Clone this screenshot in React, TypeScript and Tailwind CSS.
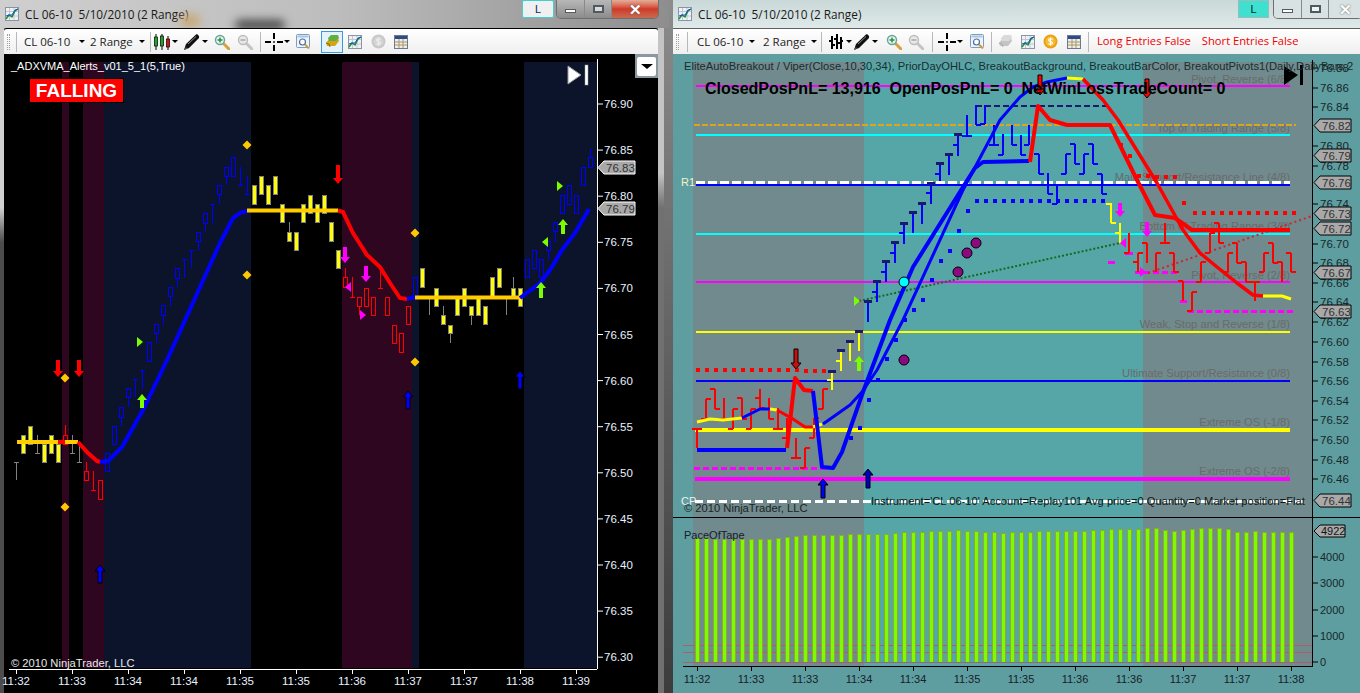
import React from "react";

type Pt = [number, number];
// x, wick top, body top, body bottom, wick bottom, colour key
type Candle = [number, number, number, number, number, "r" | "b" | "y" | "g"];
// x, high, low, open tick, close tick, colour, navy cap on top
type Ohlc = [number, number, number, number | null, number | null, string, boolean?];

const RED = "#ff0000";
const BLUE = "#0000ff";
const YEL = "#ffff00";
const MAG = "#ff00ff";
const LIME = "#7cfc00";

const pts = (p: Pt[]) => p.map((q) => q.join(",")).join(" ");

const leftCandles: Candle[] = [
  [16, 462, 462, 462, 480, "g"], [23, 435, 435, 453, 453, "y"], [30, 426, 426, 444, 444, "y"],
  [37, 435, 453, 453, 453, "g"], [44, 444, 444, 462, 462, "y"], [51, 435, 435, 453, 453, "y"],
  [58, 444, 444, 462, 462, "y"], [65, 425, 435, 444, 444, "r"], [72, 435, 453, 453, 453, "g"],
  [79, 444, 462, 462, 462, "g"], [86, 462, 471, 480, 480, "r"], [93, 471, 490, 490, 490, "r"],
  [100, 480, 480, 499, 499, "r"], [107, 453, 453, 471, 471, "b"], [114, 426, 426, 444, 444, "b"],
  [121, 407, 407, 417, 426, "b"], [128, 388, 388, 397, 407, "b"], [135, 379, 379, 379, 397, "b"],
  [142, 370, 370, 370, 389, "b"], [149, 342, 342, 361, 361, "b"], [156, 324, 324, 333, 343, "b"],
  [163, 305, 305, 315, 325, "b"], [170, 287, 287, 296, 306, "b"], [177, 268, 268, 278, 287, "b"],
  [184, 259, 259, 259, 278, "b"], [191, 250, 250, 250, 268, "b"], [198, 232, 232, 241, 251, "b"],
  [205, 213, 213, 223, 232, "b"], [212, 204, 204, 204, 223, "b"], [219, 185, 185, 194, 204, "b"],
  [226, 167, 167, 176, 185, "b"], [233, 157, 157, 176, 176, "b"], [240, 167, 185, 185, 185, "b"],
  [247, 176, 194, 194, 194, "b"], [254, 185, 185, 204, 204, "y"], [261, 176, 176, 194, 194, "y"],
  [268, 185, 185, 204, 204, "y"], [275, 176, 176, 194, 194, "y"], [282, 204, 204, 222, 222, "y"],
  [289, 222, 232, 241, 241, "y"], [296, 232, 232, 250, 250, "y"], [303, 204, 204, 222, 222, "y"],
  [310, 195, 195, 213, 213, "y"], [317, 204, 204, 222, 222, "y"], [324, 195, 195, 213, 213, "y"],
  [331, 222, 222, 241, 241, "y"], [338, 250, 250, 268, 268, "y"], [345, 268, 277, 287, 287, "r"],
  [352, 277, 297, 297, 297, "r"], [359, 297, 297, 306, 315, "r"], [366, 288, 288, 306, 306, "r"],
  [373, 297, 297, 315, 315, "r"], [380, 269, 288, 288, 288, "r"], [387, 297, 297, 315, 315, "r"],
  [394, 325, 325, 343, 343, "r"], [401, 333, 333, 352, 352, "r"], [408, 306, 306, 324, 324, "r"],
  [415, 277, 277, 296, 296, "b"], [422, 268, 268, 287, 287, "y"], [429, 297, 297, 297, 315, "g"],
  [436, 288, 288, 306, 306, "y"], [443, 306, 315, 324, 324, "y"], [450, 325, 325, 333, 343, "y"],
  [457, 297, 297, 315, 315, "y"], [464, 288, 288, 306, 306, "y"], [471, 306, 306, 315, 325, "y"],
  [478, 297, 297, 315, 315, "y"], [485, 306, 306, 324, 324, "y"], [492, 277, 277, 296, 296, "y"],
  [499, 268, 268, 287, 287, "y"], [506, 297, 297, 297, 315, "g"], [513, 277, 288, 297, 297, "y"],
  [520, 288, 288, 306, 306, "y"], [527, 259, 259, 277, 277, "b"], [534, 250, 250, 268, 268, "b"],
  [541, 259, 259, 277, 277, "b"], [548, 241, 241, 250, 260, "b"], [555, 222, 222, 231, 242, "b"],
  [562, 195, 195, 213, 213, "b"], [569, 185, 185, 204, 204, "b"], [576, 195, 195, 213, 213, "b"],
  [583, 167, 167, 185, 185, "b"], [590, 148, 157, 167, 167, "b"],
];

const rightBars: Ohlc[] = [
  [697, 429, 448, 429, 429, RED], [706, 399, 419, 419, 399, RED], [715, 389, 409, 389, 409, RED],
  [724, 398, 419, 419, 419, RED], [733, 409, 429, 429, 409, RED], [742, 398, 419, 398, 419, RED],
  [751, 409, 429, 429, 409, RED], [760, 389, 408, 398, 408, RED], [769, 398, 419, 409, 419, RED],
  [778, 408, 429, 429, 429, RED], [787, 418, 438, 438, null, RED], [796, 438, 458, 458, 458, RED],
  [805, 448, 468, 468, 448, RED], [814, 418, 438, 438, 418, RED], [823, 389, 409, 409, 389, RED],
  [832, 372, 390, 380, null, YEL, true], [841, 351, 371, 361, null, YEL, true],
  [850, 342, 361, null, null, YEL, true], [859, 332, 351, null, null, YEL, true],
  [868, 302, 322, null, null, BLUE, true], [877, 282, 302, 292, null, BLUE, true],
  [886, 262, 282, 272, null, BLUE, true], [895, 243, 263, 253, null, BLUE, true],
  [904, 224, 244, 233, null, BLUE, true], [913, 213, 233, null, null, BLUE, true],
  [922, 204, 224, null, null, BLUE, true], [931, 184, 204, 193, null, BLUE, true],
  [940, 164, 181, 174, null, BLUE, true], [949, 155, 175, null, null, BLUE, true],
  [958, 135, 156, 145, null, BLUE, true], [967, 115, 136, 136, 136, BLUE],
  [976, 105, 125, null, 125, BLUE], [985, 105, 124, 124, null, BLUE], [994, 125, 145, 145, 145, BLUE],
  [1003, 134, 155, 155, null, BLUE], [1012, 125, 145, null, 145, BLUE], [1021, 135, 155, null, 155, BLUE],
  [1029, 125, 145, 145, null, BLUE], [1039, 154, 174, 154, 174, BLUE], [1048, 173, 194, null, 194, BLUE],
  [1057, 185, 204, 204, null, BLUE], [1066, 154, 174, 174, 154, BLUE], [1075, 144, 164, 144, 164, BLUE],
  [1084, 154, 174, 174, 154, BLUE], [1093, 144, 164, 144, 164, BLUE], [1102, 174, 194, 174, 194, BLUE],
  [1111, 203, 223, 204, 223, YEL], [1120, 223, 243, 233, null, YEL], [1129, 233, 253, 253, null, RED],
  [1138, 253, 272, 262, 253, RED], [1147, 243, 263, 243, null, RED], [1156, 253, 272, null, 253, RED],
  [1165, 223, 243, 243, 243, RED], [1174, 253, 272, 253, 272, RED], [1183, 281, 301, 281, null, RED],
  [1192, 292, 311, 311, 292, RED], [1201, 262, 282, 282, 262, RED], [1210, 233, 253, 253, 233, RED],
  [1219, 223, 243, 223, 243, RED], [1228, 253, 272, 272, 253, RED], [1237, 243, 263, 243, 263, RED],
  [1246, 262, 282, 262, 282, RED], [1255, 282, 301, 282, 282, RED], [1264, 253, 272, 272, 253, RED],
  [1273, 243, 263, 243, 263, RED], [1282, 262, 282, 262, null, RED], [1291, 253, 272, 253, 272, RED],
];

const paceTops = [
  70, 70, 72, 72, 72, 72, 72, 72, 72, 68, 65, 62, 59, 59, 59, 59, 59, 56, 56, 56, 56, 56, 53, 50, 50, 50,
  47, 47, 47, 45, 47, 47, 50, 50, 53, 50, 50, 50, 47, 47, 47, 47, 47, 47, 45, 45, 42, 42, 42, 42, 38, 38,
  45, 47, 45, 42, 38, 38, 38, 42, 50, 50, 47, 50, 50, 50, 50,
];

const pivotLabels: [string, number][] = [
  ["Pivot, Reverse (6/8)", 83],
  ["Top of Trading Range (5/8)", 132],
  ["Main Support/Resistance Line (4/8)", 181],
  ["Bottom of Trading Range (3/8)", 230],
  ["Pivot, Reverse (2/8)", 279],
  ["Weak, Stop and Reverse (1/8)", 328],
  ["Ultimate Support/Resistance (0/8)", 377],
  ["Extreme OS (-1/8)", 426],
  ["Extreme OS (-2/8)", 475],
];

const rightPrices: [string, number][] = [
  ["76.88", 68], ["76.86", 88], ["76.84", 107], ["76.80", 146], ["76.78", 166], ["76.74", 204],
  ["76.70", 244], ["76.68", 263], ["76.66", 283], ["76.64", 302], ["76.62", 322], ["76.60", 342],
  ["76.58", 362], ["76.56", 381], ["76.54", 401], ["76.52", 420], ["76.50", 440], ["76.48", 460],
  ["76.46", 479],
];

const rightTags: [string, number][] = [
  ["76.82", 125], ["76.79", 155], ["76.76", 182], ["76.73", 213], ["76.72", 228], ["76.67", 272],
  ["76.63", 311], ["76.44", 500],
];

const ArrowV = ({ x, y1, y2, fill, stroke, up }: { x: number; y1: number; y2: number; fill: string; stroke?: string; up?: boolean }) => {
  const h = up ? 6 : -6;
  const tip = up ? y1 : y2;
  const end = up ? y2 : y1;
  return (
    <polygon
      points={pts([[x, tip], [x + 5, tip + h], [x + 2, tip + h], [x + 2, end], [x - 2, end], [x - 2, tip + h], [x - 5, tip + h]])}
      fill={fill}
      stroke={stroke ?? "none"}
    />
  );
};

const Tri = ({ x, y, fill, left }: { x: number; y: number; fill: string; left?: boolean }) => (
  <polygon points={left ? pts([[x - 3, y], [x + 3, y - 5], [x + 3, y + 5]]) : pts([[x + 3, y], [x - 3, y - 5], [x - 3, y + 5]])} fill={fill} />
);

const Diamond = ({ x, y }: { x: number; y: number }) => (
  <polygon points={pts([[x, y - 4.5], [x + 4.5, y], [x, y + 4.5], [x - 4.5, y]])} fill="#ffc800" />
);

const Tag = ({ y, label, left, stroke }: { y: number; label: string; left: number; stroke: string }) => (
  <g>
    <polygon
      points={pts([[left, y + 0.5], [left + 6, y - 6], [left + 37, y - 6], [left + 37, y + 7], [left + 6, y + 7]])}
      fill="#a9a9a9"
      stroke={stroke}
    />
    <text x={left + 8} y={y + 4.5} fill="#333333" fontSize={11.5}>{label}</text>
  </g>
);

/* toolbar bits */
const Grip = () => <div className="ml-[3px] h-[16px] w-[3px] border-x border-dotted border-[#a0a0a0]" />;
const Sep = ({ className }: { className: string }) => <div className={`h-[20px] w-px bg-[#b8b8b8] ${className}`} />;
const Caret = ({ className }: { className: string }) => (
  <div className={`h-0 w-0 border-x-[3.5px] border-t-[3.5px] border-x-transparent border-t-black ${className}`} />
);
const ToolLabel = ({ text, className }: { text: string; className: string }) => (
  <span className={`whitespace-nowrap text-[11.5px] text-[#1c1c1c] ${className}`}>{text}</span>
);

const CandlesIcon = () => (
  <svg width="18" height="18" viewBox="0 0 18 18">
    <path d="M3 1v16M9 1v16M15 3v14" stroke="#000" strokeWidth="1" />
    <rect x="1.5" y="4" width="3" height="9" fill="#1fa52a" stroke="#000" strokeWidth="0.7" />
    <rect x="7.5" y="3" width="3" height="10" fill="#1fa52a" stroke="#000" strokeWidth="0.7" />
    <rect x="13.5" y="6" width="3" height="8" fill="#e01010" stroke="#000" strokeWidth="0.7" />
  </svg>
);

const BarsIcon = () => (
  <svg width="16" height="18" viewBox="0 0 16 18">
    <path d="M4 3v13M9 1v15M13 4v12M1 8h3M4 12h3M6 6h3M9 10h3M13 8h2" stroke="#000" strokeWidth="2" fill="none" />
  </svg>
);

const PenIcon = () => (
  <svg width="19" height="18" viewBox="0 0 19 18">
    <path d="M1 17l2-6L13 1.500c1-1 4 1.500 3 3.500L6 15z" fill="#111" />
    <path d="M5 11L13 3.500" stroke="#8a8a8a" strokeWidth="1" />
    <path d="M1 17l2-3 1 1.500z" fill="#555" />
  </svg>
);

const ZoomIcon = ({ active, plus }: { active?: boolean; plus?: boolean }) => (
  <svg width="16" height="16" viewBox="0 0 16 16">
    <path d="M9.500 9.500L15 15" stroke={active ? "#d8a040" : "#c4c4c4"} strokeWidth="3" strokeLinecap="round" />
    <circle cx="6" cy="6" r="4.500" fill={active ? "#e8f6f2" : "#e8e8e8"} stroke={active ? "#6aa0a0" : "#bcbcbc"} strokeWidth="1.400" />
    <path d={plus ? "M3.500 6h5M6 3.500v5" : "M3.500 6h5"} stroke={active ? "#1c9a30" : "#a8a8a8"} strokeWidth="1.500" />
  </svg>
);

const CrossIcon = () => (
  <svg width="18" height="18" viewBox="0 0 18 18">
    <path d="M0 9h6M12 9h6M9 0v6M9 12v6" stroke="#000" strokeWidth="2" />
    <rect x="8.200" y="8.200" width="1.600" height="1.600" fill="#000" />
  </svg>
);

const MagDocIcon = () => (
  <svg width="15" height="15" viewBox="0 0 15 15">
    <rect x="0.500" y="0.500" width="13" height="13" rx="1" fill="#eef4fa" stroke="#7c9cc0" />
    <rect x="1.500" y="1.500" width="11" height="2" fill="#a8c4e4" />
    <circle cx="6.500" cy="8" r="3" fill="#fff" stroke="#4a6f9a" strokeWidth="1.200" />
    <path d="M9 10.500l4 4" stroke="#d09a40" strokeWidth="2" />
  </svg>
);

const IngotIcon = ({ gray }: { gray?: boolean }) => (
  <svg width="15" height="15" viewBox="0 0 15 15">
    <path d="M1 9l4-5h8l1 3-4 5H2z" fill={gray ? "#c4c4c4" : "#d4a417"} />
    <path d="M3 4l3-3h7l1 3-3 3H4z" fill={gray ? "#dadada" : "#5fb040"} />
    <path d="M1 9l3 1 1 3" stroke={gray ? "#a8a8a8" : "#8a6c08"} fill="none" />
  </svg>
);

const ChartIcon = () => (
  <svg width="14" height="14" viewBox="0 0 14 14">
    <rect x="0.500" y="0.500" width="13" height="13" fill="#eef2f6" stroke="#8a94a4" />
    <path d="M4.500 1v12M9 1v12M1 4.500h12M1 9h12" stroke="#c2c8d0" strokeWidth="1" />
    <path d="M1 12l3-4 3 2 3-6 3-2" stroke="#1c8c30" strokeWidth="1.400" fill="none" />
    <path d="M1 9l3-1 3 0 3-5 3-1" stroke="#1c50d0" strokeWidth="1" fill="none" />
  </svg>
);

const CoinIcon = ({ gold }: { gold?: boolean }) => (
  <svg width="15" height="15" viewBox="0 0 15 15">
    <circle cx="7.500" cy="7.500" r="7" fill={gold ? "#eba20f" : "#c8c8c8"} />
    <circle cx="7.500" cy="7.500" r="5" fill={gold ? "#f5bc3c" : "#d4d4d4"} />
    <path d="M9.500 5.500C9 4.500 5.500 4.200 5.500 6c0 2 4 1 4 3 0 1.700-3.500 1.500-4 .5M7.500 3.500v8" stroke={gold ? "#fff" : "#eeeeee"} strokeWidth="1.100" fill="none" />
  </svg>
);

const TableIcon = () => (
  <svg width="14" height="14" viewBox="0 0 14 14">
    <rect x="0.500" y="0.500" width="13" height="13" fill="#f4ecd8" stroke="#6a7a94" />
    <rect x="1" y="1" width="12" height="3" fill="#2c4a8c" />
    <path d="M5 4v9M9 4v9M1 7h12M1 10h12" stroke="#a09a80" strokeWidth="1" />
  </svg>
);

const TitleIcon = () => <ChartIcon />;

const WinButtons = ({ pale }: { pale?: boolean }) => (
  <div className="flex h-[19px] items-stretch overflow-hidden rounded-b-[5px] border border-t-0 border-[#6e6e6e]">
    <div className={`flex items-center justify-center border-r border-[#8a8a8a] ${pale ? "w-[28px] bg-[#d8e2e2]" : "w-[28px] bg-gradient-to-b from-[#b8b8b8] to-[#8c8c8c]"}`}>
      <div className="mt-[4px] h-[4px] w-[11px] border border-[#5a5a5a] bg-white" />
    </div>
    <div className={`flex items-center justify-center border-r border-[#8a8a8a] ${pale ? "w-[27px] bg-[#d8e2e2]" : "w-[27px] bg-gradient-to-b from-[#b8b8b8] to-[#8c8c8c]"}`}>
      <div className="h-[8px] w-[11px] border-2 border-[#4e5a5e] bg-white/60" />
    </div>
    <div className={`flex items-center justify-center text-[15px] font-bold leading-none text-white [text-shadow:0_0_2px_#555] ${pale ? "w-[33px] bg-[#d8e2e2]" : "w-[46px] bg-gradient-to-b from-[#e2ad9a] via-[#d03828] to-[#c86a50]"}`}>
      ✕
    </div>
  </div>
);

const LeftChart = () => (
  <svg width="654" height="639" viewBox="4 54 654 639" className="relative block overflow-visible">
    {/* session shading */}
    <rect x={62} y={62} width={7} height={606} fill="#2f0620" />
    <rect x={83} y={62} width={21} height={606} fill="#2f0620" />
    <rect x={104} y={62} width={147} height={606} fill="#0c142b" />
    <rect x={342} y={62} width={70} height={606} fill="#2f0620" />
    <rect x={412} y={62} width={7} height={606} fill="#0c142b" />
    <rect x={524} y={62} width={73} height={606} fill="#0c142b" />

    {leftCandles.map(([x, hi, t, b, lo, c], i) => {
      const col = c === "r" ? RED : c === "b" ? BLUE : "#808080";
      const px = x + 0.5;
      const wick = c === "y" ? "#808080" : col;
      return (
        <g key={i} shapeRendering="crispEdges">
          <line x1={px} x2={px} y1={hi} y2={t} stroke={wick} />
          <line x1={px} x2={px} y1={b} y2={lo} stroke={wick} />
          {t === b ? (
            <line x1={x - 2} x2={x + 3} y1={t + 0.5} y2={t + 0.5} stroke={col} />
          ) : (
            <rect x={x - 1.5} y={t + 0.5} width={4} height={b - t} fill={c === "y" ? YEL : "none"} stroke={c === "y" ? "#808080" : col} />
          )}
        </g>
      );
    })}

    {/* ADXVMA line */}
    <g fill="none" strokeWidth={4}>
      <polyline points={pts([[17, 442], [78, 442]])} stroke="#ffcc00" />
      <polyline points={pts([[58, 442], [65, 442]])} stroke={RED} />
      <polyline points={pts([[78, 442], [88, 453], [97, 461], [100, 462]])} stroke={RED} />
      <polyline points={pts([[100, 462], [108, 461], [122, 447], [143, 410], [167, 360], [220, 243], [233, 218], [240, 213], [247, 211]])} stroke={BLUE} />
      <polyline points={pts([[247, 210.5], [338, 210.5]])} stroke="#ffcc00" />
      <polyline points={pts([[338, 210.5], [343, 212], [353, 233], [367, 255], [380, 267], [390, 283], [400, 298], [407, 299]])} stroke={RED} />
      <polyline points={pts([[407, 299], [415, 297]])} stroke={BLUE} />
      <polyline points={pts([[415, 297.5], [520, 297.5]])} stroke="#ffcc00" />
      <polyline points={pts([[520, 298], [540, 283], [550, 270], [562, 250], [575, 233], [589, 209]])} stroke={BLUE} />
    </g>

    <Diamond x={65} y={378} />
    <Diamond x={65} y={507} />
    <Diamond x={247} y={145} />
    <Diamond x={247} y={275} />
    <Diamond x={415} y={233} />
    <Diamond x={415} y={362} />

    <ArrowV x={58} y1={360} y2={377} fill={RED} />
    <ArrowV x={79} y1={360} y2={377} fill={RED} />
    <ArrowV x={338} y1={165} y2={184} fill={RED} />
    <ArrowV x={345} y1={247} y2={263} fill={MAG} />
    <ArrowV x={366} y1={266} y2={282} fill={MAG} />
    <Tri x={348} y={287} fill={MAG} left />
    <Tri x={363} y={315} fill={MAG} />
    <Tri x={140} y={342} fill={LIME} />
    <Tri x={545} y={242} fill={LIME} left />
    <Tri x={560} y={186} fill={LIME} />
    <ArrowV up x={142} y1={394} y2={408} fill={LIME} />
    <ArrowV up x={541} y1={282} y2={298} fill={LIME} />
    <ArrowV up x={563} y1={219} y2={234} fill={LIME} />
    <ArrowV up x={100} y1={565} y2={583} fill={BLUE} stroke="#000" />
    <ArrowV up x={408} y1={391} y2={409} fill={BLUE} stroke="#000" />
    <ArrowV up x={520} y1={371} y2={389} fill={BLUE} stroke="#000" />

    <polygon points={pts([[568, 66], [581, 75], [568, 84]])} fill="#ffffff" stroke="#9a9a9a" />
    <rect x={585} y={65} width={3} height={20} fill="#ffffff" stroke="#9a9a9a" strokeWidth={0.5} />

    {/* axes */}
    <line x1={597.5} x2={597.5} y1={59} y2={669} stroke="#ffffff" />
    <line x1={9} x2={597} y1={669.5} y2={669.5} stroke="#ffffff" />
    {["76.90", "76.85", "76.80", "76.75", "76.70", "76.65", "76.60", "76.55", "76.50", "76.45", "76.40", "76.35", "76.30"].map((p, i) => {
      const y = 104 + i * 46.1;
      return (
        <g key={p}>
          <line x1={597} x2={603} y1={y} y2={y} stroke="#ffffff" />
          <text x={604} y={y + 4} fill="#e8f2ff" fontSize={11.5}>{p}</text>
        </g>
      );
    })}
    {["11:32", "11:33", "11:34", "11:34", "11:35", "11:35", "11:36", "11:37", "11:37", "11:38", "11:39"].map((t, i) => {
      const x = 16 + i * 56;
      return (
        <g key={i}>
          <line x1={x + 0.5} x2={x + 0.5} y1={669} y2={674} stroke="#ffffff" />
          <text x={x} y={685} textAnchor="middle" fill="#e8f2ff" fontSize={11.5}>{t}</text>
        </g>
      );
    })}
    <Tag y={167} label="76.83" left={598} stroke="#ffffff" />
    <Tag y={208} label="76.79" left={598} stroke="#ffffff" />

    <text x={11} y={70} fill="#ffffff" fontSize={11}>_ADXVMA_Alerts_v01_5_1(5,True)</text>
    <text x={11} y={667} fill="#e8e8e8" fontSize={11.2}>© 2010 NinjaTrader, LLC</text>
  </svg>
);

const RightChart = () => {
  const orange = "#daa520";
  return (
    <svg width="687" height="463" viewBox="673 54 687 463" className="block">
      <rect x={693} y={62} width={171} height={455} fill="#708a8d" />
      <rect x={864} y={62} width={279} height={455} fill="#56a5a7" />
      <rect x={1143} y={62} width={169} height={455} fill="#708a8d" />

      {pivotLabels.map(([t, y]) => (
        <text key={t} x={1290} y={y} textAnchor="end" fill="#6a6a6a" fontSize={11.2}>{t}</text>
      ))}

      <g fill="none" shapeRendering="crispEdges">
        <line x1={696} x2={1290} y1={86} y2={86} stroke={MAG} strokeWidth={2} />
        <line x1={694} x2={1296} y1={125} y2={125} stroke={orange} strokeWidth={2} strokeDasharray="6 2" />
        <line x1={696} x2={1290} y1={135} y2={135} stroke="#00ffff" strokeWidth={2} />
        <line x1={696} x2={1290} y1={185} y2={185} stroke={BLUE} strokeWidth={2} />
        <line x1={696} x2={1290} y1={182} y2={182} stroke="#ffffff" strokeWidth={3} strokeDasharray="9 3" />
        <line x1={696} x2={1290} y1={234} y2={234} stroke="#00ffff" strokeWidth={2} />
        <line x1={696} x2={1290} y1={282} y2={282} stroke={MAG} strokeWidth={2} />
        <line x1={696} x2={1290} y1={332} y2={332} stroke={YEL} strokeWidth={2} />
        <line x1={696} x2={1290} y1={381} y2={381} stroke={BLUE} strokeWidth={2} />
        <line x1={695} x2={1290} y1={430} y2={430} stroke={YEL} strokeWidth={4} />
        <line x1={695} x2={1290} y1={479} y2={479} stroke={MAG} strokeWidth={4} />
        <line x1={695} x2={1305} y1={501} y2={501} stroke="#ffffff" strokeWidth={3} strokeDasharray="8 4" />
        <line x1={976} x2={1106} y1={106} y2={106} stroke="#191970" strokeWidth={2} strokeDasharray="6 3" />
        <line x1={694} x2={827} y1={468} y2={468} stroke={MAG} strokeWidth={3} strokeDasharray="6 3" />
        <line x1={1135} x2={1178} y1={272} y2={272} stroke={MAG} strokeWidth={3} strokeDasharray="6 3" />
        <line x1={1188} x2={1295} y1={311} y2={311} stroke={MAG} strokeWidth={3} strokeDasharray="6 3" />
        <rect x={1108} y={261} width={7} height={3} fill={MAG} />
        <rect x={1125} y={252} width={8} height={3} fill={MAG} />
        <rect x={1180} y={300} width={7} height={3} fill={MAG} />
      </g>

      {/* stop dots */}
      <g shapeRendering="crispEdges">
        {[0, 1, 2, 3, 4, 5, 6, 7, 8, 9, 10, 11].map((i) => (
          <rect key={i} x={696 + i * 9} y={368} width={4} height={4} fill={RED} />
        ))}
        {[804, 813, 822].map((x) => (
          <rect key={x} x={x} y={369} width={4} height={4} fill={RED} />
        ))}
        {[[1119, 143], [1128, 154], [1137, 174], [1146, 174], [1155, 175], [1164, 175], [1173, 175], [1182, 201]].map(([x, y]) => (
          <rect key={x} x={x} y={y} width={4} height={4} fill={RED} />
        ))}
        {[1193, 1202, 1211, 1220, 1229, 1238, 1247, 1256, 1265, 1274, 1283, 1292].map((x) => (
          <rect key={x} x={x} y={211} width={4} height={4} fill={RED} />
        ))}
        {[975, 984, 993, 1002, 1011, 1020, 1029, 1038, 1047, 1056, 1065, 1074, 1083, 1092, 1101].map((x) => (
          <rect key={x} x={x} y={199} width={4} height={4} fill={BLUE} />
        ))}
        {[[966, 209], [957, 229], [948, 249], [939, 259], [930, 278], [921, 298], [912, 308], [903, 318], [894, 338], [885, 357], [876, 378], [867, 398], [858, 426], [849, 436]].map(([x, y]) => (
          <rect key={x} x={x} y={y} width={4} height={4} fill={BLUE} />
        ))}
      </g>

      {/* dotted trend lines */}
      <line x1={859} x2={1120} y1={301} y2={243} stroke="#176b1f" strokeWidth={2} strokeDasharray="2 2" />
      <line x1={1148} x2={1312} y1={273} y2={216} stroke="#c8282c" strokeWidth={2} strokeDasharray="2 3" />

      {/* OHLC bars */}
      {rightBars.map(([x, hi, lo, open, close, col, cap], i) => (
        <g key={i} shapeRendering="crispEdges" fill={col}>
          <rect x={x - 1} y={hi} width={2} height={lo - hi} />
          {open !== null && <rect x={x - 5} y={open - 1} width={5} height={2} />}
          {close !== null && <rect x={x} y={close - 1} width={5} height={2} />}
          {cap && <rect x={x - 4} y={hi - 2} width={8} height={3} fill="#191970" />}
        </g>
      ))}

      {/* viper thick lines */}
      <g fill="none" strokeWidth={3} strokeLinejoin="round">
        <polyline points={pts([[697, 422], [710, 419], [723, 420], [742, 418]])} stroke={YEL} />
        <polyline points={pts([[742, 418], [760, 409], [770, 409]])} stroke={BLUE} />
        <polyline points={pts([[770, 409], [777, 410]])} stroke={YEL} />
        <polyline points={pts([[777, 410], [793, 419], [805, 427], [813, 427]])} stroke={RED} />
        <polyline points={pts([[813, 427], [822, 424]])} stroke={YEL} />
        <polyline points={pts([[823, 424], [833, 417], [850, 405], [862, 392], [877, 370], [903, 320], [963, 190], [1000, 120], [1020, 97], [1033, 87], [1047, 82], [1067, 78]])} stroke={BLUE} />
        <polyline points={pts([[1067, 78], [1083, 79]])} stroke={YEL} />
        <polyline points={pts([[1083, 79], [1103, 100], [1118, 120], [1157, 183], [1183, 230], [1200, 253], [1217, 267], [1237, 283], [1253, 295], [1263, 296]])} stroke={RED} strokeWidth={3.500} />
        <polyline points={pts([[1263, 296], [1282, 296], [1291, 299]])} stroke={YEL} />
      </g>
      <g fill="none" strokeWidth={4} strokeLinejoin="round">
        <polyline points={pts([[697, 450], [786, 450]])} stroke={BLUE} />
        <polyline points={pts([[787, 448], [795, 378], [804, 390], [813, 391]])} stroke={RED} />
        <polyline points={pts([[813, 391], [822, 467], [833, 468], [842, 452], [863, 392], [890, 320], [913, 267], [963, 187], [975, 168], [983, 162], [1029, 161]])} stroke={BLUE} />
        <polyline points={pts([[1030, 162], [1038, 106], [1050, 120], [1067, 125], [1110, 125], [1137, 180], [1155, 215], [1175, 218], [1192, 230], [1290, 230]])} stroke={RED} />
      </g>

      <circle cx={976} cy={243} r={5} fill="#8b0a80" stroke="#000" />
      <circle cx={967} cy={253} r={5} fill="#8b0a80" stroke="#000" />
      <circle cx={958} cy={272} r={5} fill="#8b0a80" stroke="#000" />
      <circle cx={904} cy={360} r={5} fill="#8b0a80" stroke="#000" />
      <circle cx={904} cy={282} r={5} fill="#00ffff" stroke="#000" />

      <Tri x={857} y={301} fill={LIME} />
      <Tri x={1123} y={243} fill={MAG} left />
      <Tri x={1143} y={272} fill={MAG} />
      <ArrowV x={1120} y1={203} y2={217} fill={MAG} />
      <ArrowV x={1147} y1={222} y2={237} fill={MAG} />
      <ArrowV x={796} y1={349} y2={369} fill="#c81010" stroke="#000" />
      <ArrowV x={1040} y1={75} y2={95} fill={RED} stroke="#000" />
      <ArrowV x={1147} y1={79} y2={98} fill={RED} stroke="#000" />
      <ArrowV up x={823} y1={479} y2={498} fill={BLUE} stroke="#000" />
      <ArrowV up x={868} y1={469} y2={488} fill="#0000c0" stroke="#000" />
      <ArrowV up x={859} y1={356} y2={371} fill={LIME} />

      <polygon points={pts([[1284, 66], [1298, 75], [1284, 85]])} fill="#000000" />
      <rect x={1300} y={65} width={3} height={20} fill="#000000" />

      {/* axis */}
      <line x1={1312.500} x2={1312.500} y1={60} y2={517} stroke="#000" />
      {rightPrices.map(([p, y]) => (
        <g key={p}>
          <line x1={1312} x2={1318} y1={y} y2={y} stroke="#000" />
          <text x={1320} y={y + 4} fill="#16282a" fontSize={11.5}>{p}</text>
        </g>
      ))}
      {rightTags.map(([p, y]) => (
        <Tag key={p} y={y} label={p} left={1314} stroke="#000" />
      ))}

      <text x={684} y={70} fill="#1c2c2e" fontSize={11.2}>EliteAutoBreakout / Viper(Close,10,30,34), PriorDayOHLC, BreakoutBackground, BreakoutBarColor, BreakoutPivots1(Daily,DailyBars,2</text>
      <text x={705} y={93.5} fill="#000" fontSize={16} fontWeight={700} xmlSpace="preserve">ClosedPosPnL= 13,916  OpenPosPnL= 0  NetWinLossTradeCount= 0</text>
      <text x={681} y={186} fill="#f4f0c8" fontSize={11}>R1</text>
      <text x={681} y={505} fill="#f0f0f0" fontSize={11}>CP</text>
      <text x={871} y={505} fill="#101818" fontSize={11.15}>Instrument='CL 06-10' Account=Replay101 Avg price=0 Quantity=0 Market position=Flat</text>
      <text x={684} y={512} fill="#1c2424" fontSize={11.2}>© 2010 NinjaTrader, LLC</text>
    </svg>
  );
};

const PacePanel = () => (
  <svg width="687" height="175" viewBox="673 518 687 175" className="block">
    <rect x={693} y={518} width={171} height={148} fill="#708a8d" />
    <rect x={864} y={518} width={279} height={148} fill="#56a5a7" />
    <rect x={1143} y={518} width={169} height={148} fill="#708a8d" />
    {[645, 652, 662].map((y) => (
      <line key={y} x1={683} x2={1312} y1={y + 0.5} y2={y + 0.5} stroke="#a8606e" strokeWidth={1} />
    ))}
    {paceTops.map((v, i) => {
      const top = Math.round(515 + v / 3);
      return (
        <g key={i} shapeRendering="crispEdges">
          <rect x={695 + i * 9} y={top} width={5} height={662 - top} fill="#8caa2c" />
          <rect x={696 + i * 9} y={top + 1} width={3} height={661 - top} fill={LIME} />
        </g>
      );
    })}
    <text x={684} y={539} fill="#16202a" fontSize={11}>PaceOfTape</text>
    <line x1={1312.500} x2={1312.500} y1={518} y2={667} stroke="#000" />
    <line x1={683} x2={1312} y1={666.500} y2={666.500} stroke="#000" />
    {[["4000", 557], ["3000", 583], ["2000", 610], ["1000", 636], ["0", 662]].map(([t, y]) => (
      <g key={t}>
        <line x1={1312} x2={1318} y1={Number(y)} y2={Number(y)} stroke="#000" />
        <text x={1320} y={Number(y) + 4} fill="#16282a" fontSize={11}>{t}</text>
      </g>
    ))}
    <polygon points={pts([[1314, 531], [1320, 525], [1345, 525], [1345, 537], [1320, 537]])} fill="#a9a9a9" stroke="#000" />
    <text x={1321} y={535} fill="#111" fontSize={11}>4922</text>
    {["11:32", "11:33", "11:33", "11:34", "11:34", "11:35", "11:35", "11:36", "11:36", "11:37", "11:37", "11:38"].map((t, i) => {
      const x = 697 + i * 54;
      return (
        <g key={i}>
          <line x1={x + 0.5} x2={x + 0.5} y1={666} y2={671} stroke="#000" />
          <text x={x} y={683} textAnchor="middle" fill="#16202a" fontSize={11}>{t}</text>
        </g>
      );
    })}
  </svg>
);

export default function App() {
  return (
    <div className="flex h-[693px] w-[1360px] overflow-hidden bg-[#6e7474] font-['Liberation_Sans',sans-serif]">
      {/* left chart window */}
      <div className="flex w-[673px] flex-none">
        <div className="w-[4px] flex-none bg-gradient-to-b from-[#d0d0d0] from-30% to-[#4c4c4c] to-35%" />
        <div className="flex w-[654px] flex-none flex-col">
          <div className="relative -ml-[4px] flex h-[28px] w-[669px] flex-none items-start overflow-hidden bg-gradient-to-r from-[#cfcfcf] via-[#bdbdbd] to-[#8e8e8e]">
            <div className="absolute left-[235px] top-[20px] h-[10px] w-[50px] rounded-full bg-[#444] blur-[5px]" />
            <div className="absolute left-[180px] top-[14px] h-[14px] w-[20px] rounded-full bg-[#c8a878] blur-[5px]" />
            <div className="ml-[5px] mt-[7px]"><TitleIcon /></div>
            <span className="ml-[6px] mt-[6px] whitespace-pre font-['Open_Sans',sans-serif] text-[11.8px] text-[#1a1a1a]">CL 06-10  5/10/2010 (2 Range)</span>
            <div className="absolute left-[522px] top-0 flex h-[18px] w-[32px] items-center justify-center rounded-[2px] border border-[#40d0d0] bg-[#f0f0f0] text-[11px] text-[#003060]">L</div>
            <div className="absolute left-[556px] top-0"><WinButtons /></div>
          </div>
          <div className="flex h-[26px] flex-none items-center rounded-t-[3px] border-t border-black bg-gradient-to-b from-white to-[#efefef] font-['Open_Sans',sans-serif]">
            <Grip />
            <Sep className="ml-[6px]" />
            <ToolLabel text="CL 06-10" className="ml-[7px] w-[47px]" />
            <Caret className="ml-[8px]" />
            <ToolLabel text="2 Range" className="ml-[5px] w-[44px]" />
            <Caret className="ml-[5px]" />
            <Sep className="ml-[5px]" />
            <div className="ml-[2px]"><CandlesIcon /></div>
            <Caret className="ml-[1px]" />
            <div className="ml-[5px]"><PenIcon /></div>
            <Caret className="ml-[0px]" />
            <div className="ml-[6px]"><ZoomIcon active plus /></div>
            <div className="ml-[7px]"><ZoomIcon /></div>
            <Sep className="ml-[7px]" />
            <div className="ml-[4px]"><CrossIcon /></div>
            <Caret className="ml-[1px]" />
            <div className="ml-[6px]"><MagDocIcon /></div>
            <div className="ml-[10px] flex h-[22px] w-[22px] items-center justify-center border border-[#3c9adc] bg-[#e4f2fc]"><IngotIcon /></div>
            <div className="ml-[5px]"><ChartIcon /></div>
            <div className="ml-[9px]"><CoinIcon /></div>
            <div className="ml-[8px]"><TableIcon /></div>
          </div>
          <div className="relative h-[639px] flex-none bg-black">
            <LeftChart />
            <div className="absolute left-[26px] top-[25px] flex h-[23px] w-[93px] items-center justify-center bg-[#ff0000] text-[19px] font-bold leading-none text-white outline outline-1 outline-black">FALLING</div>
            <div className="absolute left-[631px] top-0 flex h-[24px] w-[23px] items-center justify-center bg-[#8a98a0]">
              <div className="flex h-[19px] w-[19px] items-center justify-center rounded-[2px] bg-white">
                <div className="h-0 w-0 border-x-[6px] border-t-[5px] border-x-transparent border-t-black" />
              </div>
            </div>
          </div>
        </div>
        <div className="w-[6px] flex-none bg-gradient-to-b from-[#c4c4c4] from-25% to-[#707070] to-30%" />
        <div className="w-[9px] flex-none bg-gradient-to-b from-[#8c8c8c] to-[#3c3c3c]" />
      </div>

      {/* right chart window */}
      <div className="flex w-[687px] flex-none flex-col">
        <div className="relative flex h-[28px] flex-none items-start bg-gradient-to-b from-[#c9d8d8] to-[#dfe9e9]">
          <div className="ml-[5px] mt-[7px]"><TitleIcon /></div>
          <span className="ml-[6px] mt-[6px] whitespace-pre font-['Open_Sans',sans-serif] text-[11.8px] text-[#1a1a1a]">CL 06-10  5/10/2010 (2 Range)</span>
          <div className="absolute left-[565px] top-0 flex h-[18px] w-[31px] items-center justify-center border border-[#9cbcbc] bg-[#40e0d0] text-[11px] text-[#00242a]">L</div>
          <div className="absolute left-[600px] top-0"><WinButtons pale /></div>
        </div>
        <div className="flex h-[26px] flex-none items-center border-t border-[#606060] bg-gradient-to-b from-white to-[#efefef] font-['Open_Sans',sans-serif]">
          <Grip />
          <Sep className="ml-[8px]" />
          <ToolLabel text="CL 06-10" className="ml-[9px] w-[47px]" />
          <Caret className="ml-[5px]" />
          <ToolLabel text="2 Range" className="ml-[8px] w-[44px]" />
          <Caret className="ml-[4px]" />
          <Sep className="ml-[4px]" />
          <div className="ml-[6px]"><BarsIcon /></div>
          <Caret className="ml-[2px]" />
          <div className="ml-[1px]"><PenIcon /></div>
          <Caret className="ml-[0px]" />
          <div className="ml-[8px]"><ZoomIcon active plus /></div>
          <div className="ml-[6px]"><ZoomIcon /></div>
          <Sep className="ml-[8px]" />
          <div className="ml-[5px]"><CrossIcon /></div>
          <Caret className="ml-[1px]" />
          <div className="ml-[7px]"><MagDocIcon /></div>
          <Sep className="ml-[6px]" />
          <div className="ml-[6px]"><IngotIcon gray /></div>
          <div className="ml-[8px]"><ChartIcon /></div>
          <div className="ml-[8px]"><CoinIcon gold /></div>
          <div className="ml-[9px]"><TableIcon /></div>
          <Sep className="ml-[7px]" />
          <span className="ml-[8px] whitespace-nowrap text-[11.2px] text-[#f00000]">Long Entries False</span>
          <span className="ml-[11px] whitespace-nowrap text-[11.2px] text-[#f00000]">Short Entries False</span>
        </div>
        <div className="flex-none bg-[#5f9ea0]">
          <RightChart />
          <div className="h-px bg-black" />
          <PacePanel />
        </div>
      </div>
    </div>
  );
}
